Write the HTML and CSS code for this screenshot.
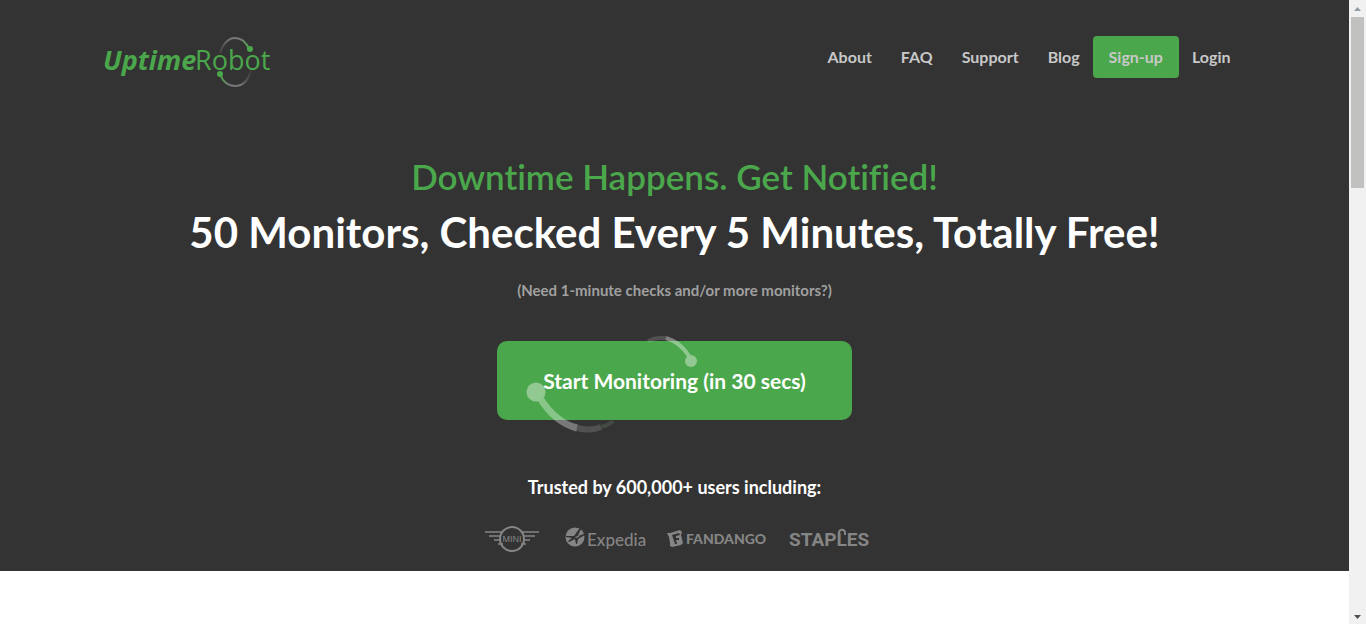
FILE: index.html
```html
<!DOCTYPE html>
<html lang="en">
<head>
<meta charset="utf-8">
<title>Uptime Robot</title>
<link rel="stylesheet" href="styles.css">
</head>
<body>
<div class="page">
  <div class="hero">
    <header class="container header">
      <a class="logo" href="#" aria-label="UptimeRobot">
        <svg width="168" height="54" viewBox="0 0 168 54">
          <defs>
            <linearGradient id="arc-top" x1="0" x2="1"><stop offset="0" stop-color="#444"/><stop offset=".35" stop-color="#777"/><stop offset=".7" stop-color="#777"/><stop offset="1" stop-color="#4ba74b"/></linearGradient>
            <linearGradient id="arc-bottom" x1="0" x2="1"><stop offset="0" stop-color="#4ba74b"/><stop offset=".3" stop-color="#777"/><stop offset=".65" stop-color="#777"/><stop offset="1" stop-color="#3c3c3c"/></linearGradient>
          </defs>
          <path d="M115 17C118 7 124 2 130 2c6 0 11 4 14 11" fill="none" stroke="url(#arc-top)" stroke-width="2"/>
          <circle cx="145" cy="13" r="3" fill="#4ba74b"/>
          <path d="M115 38c3 8 8 12 15 12 8 0 14-6 16-16" fill="none" stroke="url(#arc-bottom)" stroke-width="2"/>
          <circle cx="115" cy="38" r="3" fill="#4ba74b"/>
          <text class="logo-bold" x="-2" y="34">Uptime</text>
          <text class="logo-light" x="90" y="34">Robot</text>
        </svg>
      </a>
      <nav class="nav">
        <a href="#">About</a>
        <a href="#">FAQ</a>
        <a href="#">Support</a>
        <a href="#">Blog</a>
        <a class="signup" href="#">Sign-up</a>
        <a href="#">Login</a>
      </nav>
    </header>
    <main class="container intro">
      <h2 class="tagline">Downtime Happens. Get Notified!</h2>
      <h1 class="headline">50 Monitors, Checked Every 5 Minutes, Totally Free!</h1>
      <a class="more" href="#">(Need 1-minute checks and/or more monitors?)</a>
      <button class="start" type="button">
        <svg class="swirl" width="180" height="104" viewBox="0 0 180 104">
          <path d="M122 9c4-2 8-3 12-3h6" fill="none" stroke="#fff" stroke-opacity=".15" stroke-width="4"/>
          <path d="M140 6c10 3 18 10 23 18" fill="none" stroke="#fff" stroke-opacity=".38" stroke-width="4"/>
          <circle cx="165" cy="29" r="6" fill="#92c892"/>
          <path d="M14 66C24 82 35 92 51 96" fill="none" stroke="#fff" stroke-opacity=".34" stroke-width="7"/>
          <path d="M51 96c8 2 17 2 24-1" fill="none" stroke="#fff" stroke-opacity=".15" stroke-width="6"/>
          <path d="M75 95c5-1 9-3 12-6" fill="none" stroke="#434943" stroke-width="4"/>
          <circle cx="10" cy="60" r="9.500" fill="#92c892"/>
        </svg>
        <span class="start-label">Start Monitoring (in 30 secs)</span>
      </button>
      <p class="trusted">Trusted by 600,000+ users including:</p>
      <div class="brands">
        <svg width="60" height="28" viewBox="0 0 60 28" role="img" aria-label="MINI">
          <g fill="none" stroke="#858585" stroke-width="2">
            <circle cx="27" cy="14" r="12"/>
            <path d="M0 7h17M4 11h12M9 15h7M13 19h5M54 7H37M50 11H38M45 15h-7M41 19h-5" stroke-width="1.600"/>
          </g>
          <text class="mini" x="27" y="17">MINI</text>
        </svg>
        <svg width="82" height="28" viewBox="0 0 82 28" role="img" aria-label="Expedia">
          <circle cx="10" cy="12" r="9.500" fill="#858585"/>
          <path d="M1 11l8 0 5-7 2 0-3 7 6-2 1 1-7 4-1 5-1 0-1-5-6 3-1-1 4-3-6-1z" fill="#333"/>
          <path d="M10 12l3-1 2-5-1 6-3 1z" fill="#858585"/>
          <text class="expedia" x="22" y="21">Expedia</text>
        </svg>
        <svg width="102" height="28" viewBox="0 0 102 28" role="img" aria-label="Fandango">
          <path d="M0 8l3 0 10-3 2 2-1 3 2 8-2 2-9 2-2-1 0-3-1-6z" fill="#858585"/>
          <path d="M5 10l7-2 1 2-4 1 0 2 3 0 0 2-3 0 1 4-2 0z" fill="#333"/>
          <text class="fandango" x="19" y="19">FANDANGO</text>
        </svg>
        <svg width="82" height="28" viewBox="0 0 82 28" role="img" aria-label="Staples">
          <text class="staples" x="0" y="21">STAPLES</text>
          <path d="M50 9V7c1-3 5-3 6 0v3" fill="none" stroke="#858585" stroke-width="2"/>
        </svg>
      </div>
    </main>
  </div>
</div>
<div class="scrollbar" aria-hidden="true">
  <svg width="17" height="17"><path d="M5 11h7L8.500 7z" fill="#939ca3"/></svg>
  <div class="thumb"></div>
  <svg class="down" width="17" height="17"><path d="M5 8h7l-3.500 4z" fill="#505050"/></svg>
</div>
</body>
</html>
```
FILE: styles.css
```css
* { box-sizing: border-box; }

body {
  margin: 0;
  min-height: 100vh;
  display: flex;
  background: #fff;
  font-family: Lato, "Open Sans", sans-serif;
  font-weight: 700;
  font-variant-ligatures: none;
}

a { color: inherit; text-decoration: none; }

.page { flex: 1; min-width: 0; }
.hero { background: #333; padding: 36px 16px 18px; }
.container { max-width: 1140px; margin: 0 auto; }

.header { display: flex; justify-content: space-between; align-items: flex-start; }
.logo svg { display: block; overflow: visible; }
.logo-bold { font: italic 700 27px "Open Sans", sans-serif; fill: #4ba74b; }
.logo-light { font: 400 27px "Open Sans", sans-serif; fill: #4ba74b; }

.nav { display: flex; gap: 29px; padding-right: 14px; font-size: 16px; line-height: 42px; color: #c8c8c8; }
.signup { margin: 0 -16px; padding: 0 16px; border-radius: 4px; background: #4ba74b; }

.intro { display: flex; flex-direction: column; align-items: center; padding-top: 62px; text-align: center; }
.tagline { margin: 0; font-size: 35px; line-height: 48px; font-weight: 600; color: #4ba74b; }
.headline { margin: 0; font-size: 42px; line-height: 64px; font-weight: 700; color: #fff; }
.more { margin-top: 16px; font-size: 15px; line-height: 20px; color: #a0a0a0; }

.start {
  position: relative;
  margin-top: 41px;
  padding: 0 46px;
  min-width: 355px;
  border: 0;
  border-radius: 10px;
  background: #4ba74b;
  color: #fff;
  font: inherit;
  font-size: 21px;
  line-height: 79px;
  cursor: pointer;
}
.start-label { position: relative; }
.swirl { position: absolute; left: 29px; top: -9px; }

.trusted { margin: 55px 0 0; font-size: 18px; line-height: 24px; color: #fff; }
.brands { display: flex; gap: 20px; margin-top: 26px; padding-left: 6px; }
.brands svg { display: block; overflow: visible; }
.brands text { fill: #858585; }
.brands .mini { font: 400 9px "Liberation Sans", sans-serif; text-anchor: middle; }
.expedia { font: 500 17px Lato, sans-serif; }
.fandango { font: 900 14px Lato, sans-serif; }
.staples { font: 700 19px Roboto, sans-serif; }

.scrollbar { flex: none; display: flex; flex-direction: column; width: 17px; padding: 0; background: #f1f1f1; }
.thumb { height: 171px; margin: 0 2px; background: #c1c1bf; }
.scrollbar .down { margin-top: auto; }
```
